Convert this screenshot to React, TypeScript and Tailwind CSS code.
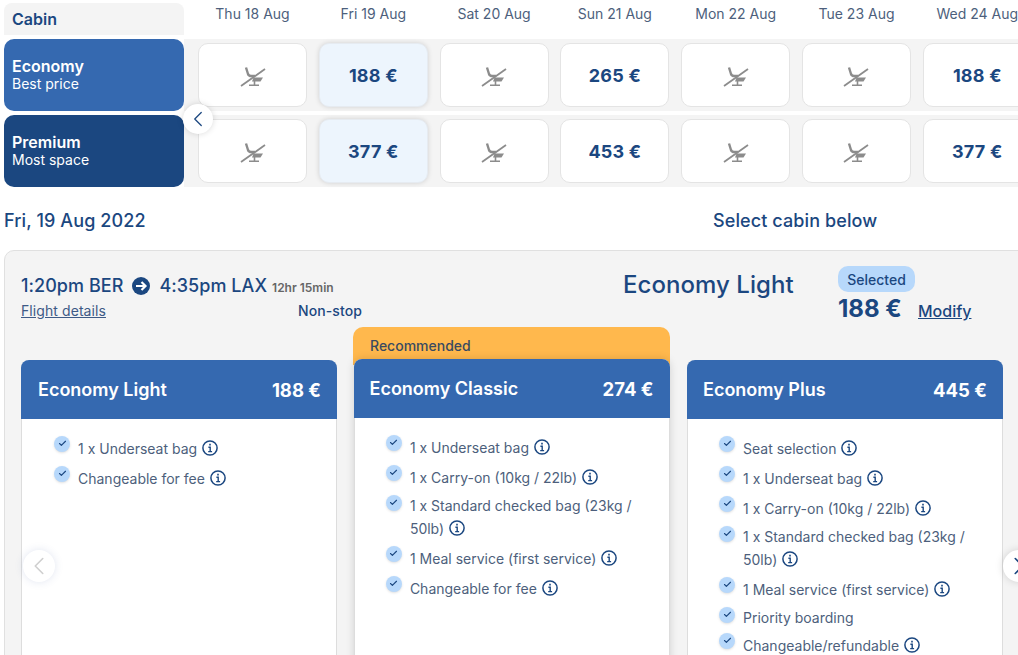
import { ChevronLeft, ChevronRight, Check } from 'lucide-react';

const dates = ['Thu 18 Aug', 'Fri 19 Aug', 'Sat 20 Aug', 'Sun 21 Aug', 'Mon 22 Aug', 'Tue 23 Aug', 'Wed 24 Aug'];

const cabins = [
    { name: 'Economy', note: 'Best price', bg: 'bg-[#3569b0]', prices: ['', '188 €', '', '265 €', '', '', '188 €'] },
    { name: 'Premium', note: 'Most space', bg: 'bg-[#1b4780]', prices: ['', '377 €', '', '453 €', '', '', '377 €'] },
];

const light = [
    { text: '1 x Underseat bag', info: true },
    { text: 'Changeable for fee', info: true },
];

const classic = [
    { text: '1 x Underseat bag', info: true },
    { text: '1 x Carry-on (10kg / 22lb)', info: true },
    { text: '1 x Standard checked bag (23kg / 50lb)', info: true },
    { text: '1 Meal service (first service)', info: true },
    { text: 'Changeable for fee', info: true },
];

const plus = [
    { text: 'Seat selection', info: true },
    { text: '1 x Underseat bag', info: true },
    { text: '1 x Carry-on (10kg / 22lb)', info: true },
    { text: '1 x Standard checked bag (23kg / 50lb)', info: true },
    { text: '1 Meal service (first service)', info: true },
    { text: 'Priority boarding', info: false },
    { text: 'Changeable/refundable', info: true },
];

function NoSeat() {
    return (
        <svg width="26" height="20" viewBox="0 0 26 20" fill="none" className="mt-[2px] text-[#8c8c8c]">
            <path d="M1 19L25 2" stroke="currentColor" strokeWidth="1.8" />
            <path d="M6 0.5L8 7C8.5 8.5 10 9 11.5 9H15" stroke="currentColor" strokeWidth="2.4" />
            <path d="M13.5 10.5H23L20.5 14.5H12Z" fill="currentColor" />
            <path d="M14.5 14V18M9 18.3H19" stroke="currentColor" strokeWidth="1.6" />
        </svg>
    );
}

function InfoIcon() {
    return (
        <svg width="16" height="16" viewBox="0 0 16 16" fill="none" stroke="#1b4780" className="inline-block ml-[5px] mt-[4px] mb-[5px] align-[-7px]">
            <circle cx="8" cy="8" r="7.1" strokeWidth="1.5" />
            <path d="M6.4 7.2H8.2V11.6M6.2 11.6H10.1" strokeWidth="1.4" />
            <path d="M7.2 4.6H8.8" strokeWidth="1.7" />
        </svg>
    );
}

function Feature({ text, info }: { text: string; info: boolean }) {
    return (
        <li className="flex items-start gap-2 mb-[5px]">
            <span className="flex items-center justify-center w-4 h-4 shrink-0 rounded-full bg-[#b7d8fb] text-[#1b4780] shadow-sm">
                <Check size={9} strokeWidth={3} />
            </span>
            <span className="text-sm leading-[21px] text-[#4d5f7c]">
                {text}
                {info && <InfoIcon />}
            </span>
        </li>
    );
}

function FareCard({ title, price, items, className, headClass, listClass }: { title: string; price: string; items: { text: string; info: boolean }[]; className: string; headClass: string; listClass: string }) {
    return (
        <div className={`h-[420px] rounded-t-lg border-x border-[#dddddd] bg-white ${className}`}>
            <div className={`flex items-center justify-between h-[59px] -mx-px pt-px pr-4 rounded-t-lg bg-[#3569b0] text-white text-lg font-semibold ${headClass}`}>
                <span>{title}</span>
                <span className="text-[18.5px] font-bold">{price}</span>
            </div>
            <ul className={`pt-[16.6px] pr-7 ${listClass}`}>
                {items.map((item) => (
                    <Feature key={item.text} {...item} />
                ))}
            </ul>
        </div>
    );
}

export default function App() {
    return (
        <div className="relative w-[1018px] h-[655px] overflow-hidden bg-white font-['Inter',sans-serif] text-[#1b4780]">
            {/* date header */}
            <div className="flex h-[39px] pl-1">
                <div className="w-[180px] h-8 mt-[3px] shrink-0 pl-2 pt-1 rounded-t-lg bg-[#f4f4f4] font-semibold">Cabin</div>
                <div className="flex gap-[11.8px] pl-[14px]">
                    {dates.map((d) => (
                        <div key={d} className="w-[109px] shrink-0 pt-[4px] text-center text-sm whitespace-nowrap text-[#4d5f7c]">{d}</div>
                    ))}
                </div>
            </div>

            {/* cabin rows */}
            {cabins.map((cabin) => (
                <div key={cabin.name} className="flex h-[72px] mb-1 pl-1">
                    <div className={`flex flex-col justify-center w-[180px] shrink-0 pl-2 rounded-[10px] text-white ${cabin.bg}`}>
                        <div className="font-semibold leading-[19px]">{cabin.name}</div>
                        <div className="text-sm leading-[16px] pb-px">{cabin.note}</div>
                    </div>
                    <div className="flex items-center gap-[11.8px] flex-1 pl-[14px] bg-[#f4f4f4]">
                        {cabin.prices.map((price, i) => (
                            <div
                                key={i}
                                className={`flex items-center justify-center w-[109px] h-16 shrink-0 pt-[2px] rounded-[10px] text-lg tracking-[0.2px] font-bold ${i === 1 ? 'bg-[#edf5fd] border border-[#e6ebf1] shadow-[0_0_5px_rgba(0,0,0,0.15)]' : 'bg-white border border-[#e4e4e4]'}`}
                            >
                                {price || <NoSeat />}
                            </div>
                        ))}
                    </div>
                </div>
            ))}

            <div className="absolute left-[183px] top-[104px] flex items-center justify-center w-[30px] h-[30px] rounded-full bg-white shadow-[0_0_6px_rgba(0,0,0,0.15)]">
                <ChevronLeft size={26} strokeWidth={1.2} />
            </div>

            {/* selected day */}
            <div className="flex items-center h-6 mt-[22px] pb-px pl-1 text-lg font-medium tracking-[0.1px]">
                <div className="w-[709px]">Fri, 19 Aug 2022</div>
                <div>Select cabin below</div>
            </div>

            {/* flight panel */}
            <div className="w-[1040px] h-[500px] mt-[17px] ml-1 pl-4 rounded-tl-[10px] border border-[#e0e0e0] bg-[#f4f4f4]">
                <div className="flex h-[76px]">
                    <div className="w-[602px] pt-6">
                        <div className="flex items-center h-[22px] text-lg font-medium tracking-[0.05px]">
                            <span>1:20pm BER</span>
                            <svg width="18" height="18" viewBox="0 0 18 18" className="mx-[9px]">
                                <circle cx="9" cy="9" r="9" fill="#1b4780" />
                                <path d="M4 9H13M9.5 5L13.5 9L9.5 13" fill="none" stroke="#ffffff" strokeWidth="2.2" />
                            </svg>
                            <span>4:35pm LAX</span>
                            <span className="ml-[5px] mt-[3px] text-xs font-semibold tracking-normal text-[#666666]">12hr 15min</span>
                        </div>
                        <div className="flex items-center mt-[3px] text-sm">
                            <a className="w-[277px] pt-px underline tracking-[0.08px] text-[#3d5a86]">Flight details</a>
                            <span className="font-medium tracking-[0.1px]">Non-stop</span>
                        </div>
                    </div>
                    <div className="w-[215px] pt-[18px] text-2xl font-medium tracking-[0.05px]">Economy Light</div>
                    <div className="pt-[15px]">
                        <div className="flex items-center justify-center w-[77px] h-[26px] pt-px rounded-[10px] bg-[#b7d8fb] text-sm font-medium">Selected</div>
                        <div className="flex items-baseline mt-[1px]">
                            <span className="w-20 text-2xl font-bold">188 €</span>
                            <a className="font-medium underline">Modify</a>
                        </div>
                    </div>
                </div>

                <div className="flex items-start">
                    <FareCard title="Economy Light" price="188 €" items={light} className="w-[316px] mt-[33px]" headClass="pl-[17px]" listClass="pl-8" />
                    <div className="w-[317px] ml-4 shrink-0">
                        <div className="h-[38px] -mb-[6px] px-[17px] pt-[9px] rounded-t-[10px] bg-[#ffb84d] text-sm font-medium text-[#3a4a60]">Recommended</div>
                        <FareCard title="Economy Classic" price="274 €" items={classic} className="relative w-[316px] ml-[0.5px] shadow-[0_0_8px_rgba(0,0,0,0.15)]" headClass="pl-4" listClass="pl-[31.4px]" />
                    </div>
                    <FareCard title="Economy Plus" price="445 €" items={plus} className="w-[316px] ml-[17px] mt-[33px]" headClass="pl-4" listClass="pl-[31px]" />
                </div>
            </div>

            {/* carousel arrows */}
            <div className="absolute left-[23px] top-[550px] flex items-center justify-center w-8 h-8 rounded-full bg-white text-[#cfcfcf] shadow-[0_0_8px_rgba(60,90,160,0.15)]">
                <ChevronLeft size={30} strokeWidth={1.3} />
            </div>
            <div className="absolute left-[1003px] top-[550px] flex items-center justify-center w-8 h-8 rounded-full bg-white text-[#1b4780] shadow-[0_0_8px_rgba(0,0,0,0.15)]">
                <ChevronRight size={30} strokeWidth={1.3} />
            </div>
        </div>
    );
}
